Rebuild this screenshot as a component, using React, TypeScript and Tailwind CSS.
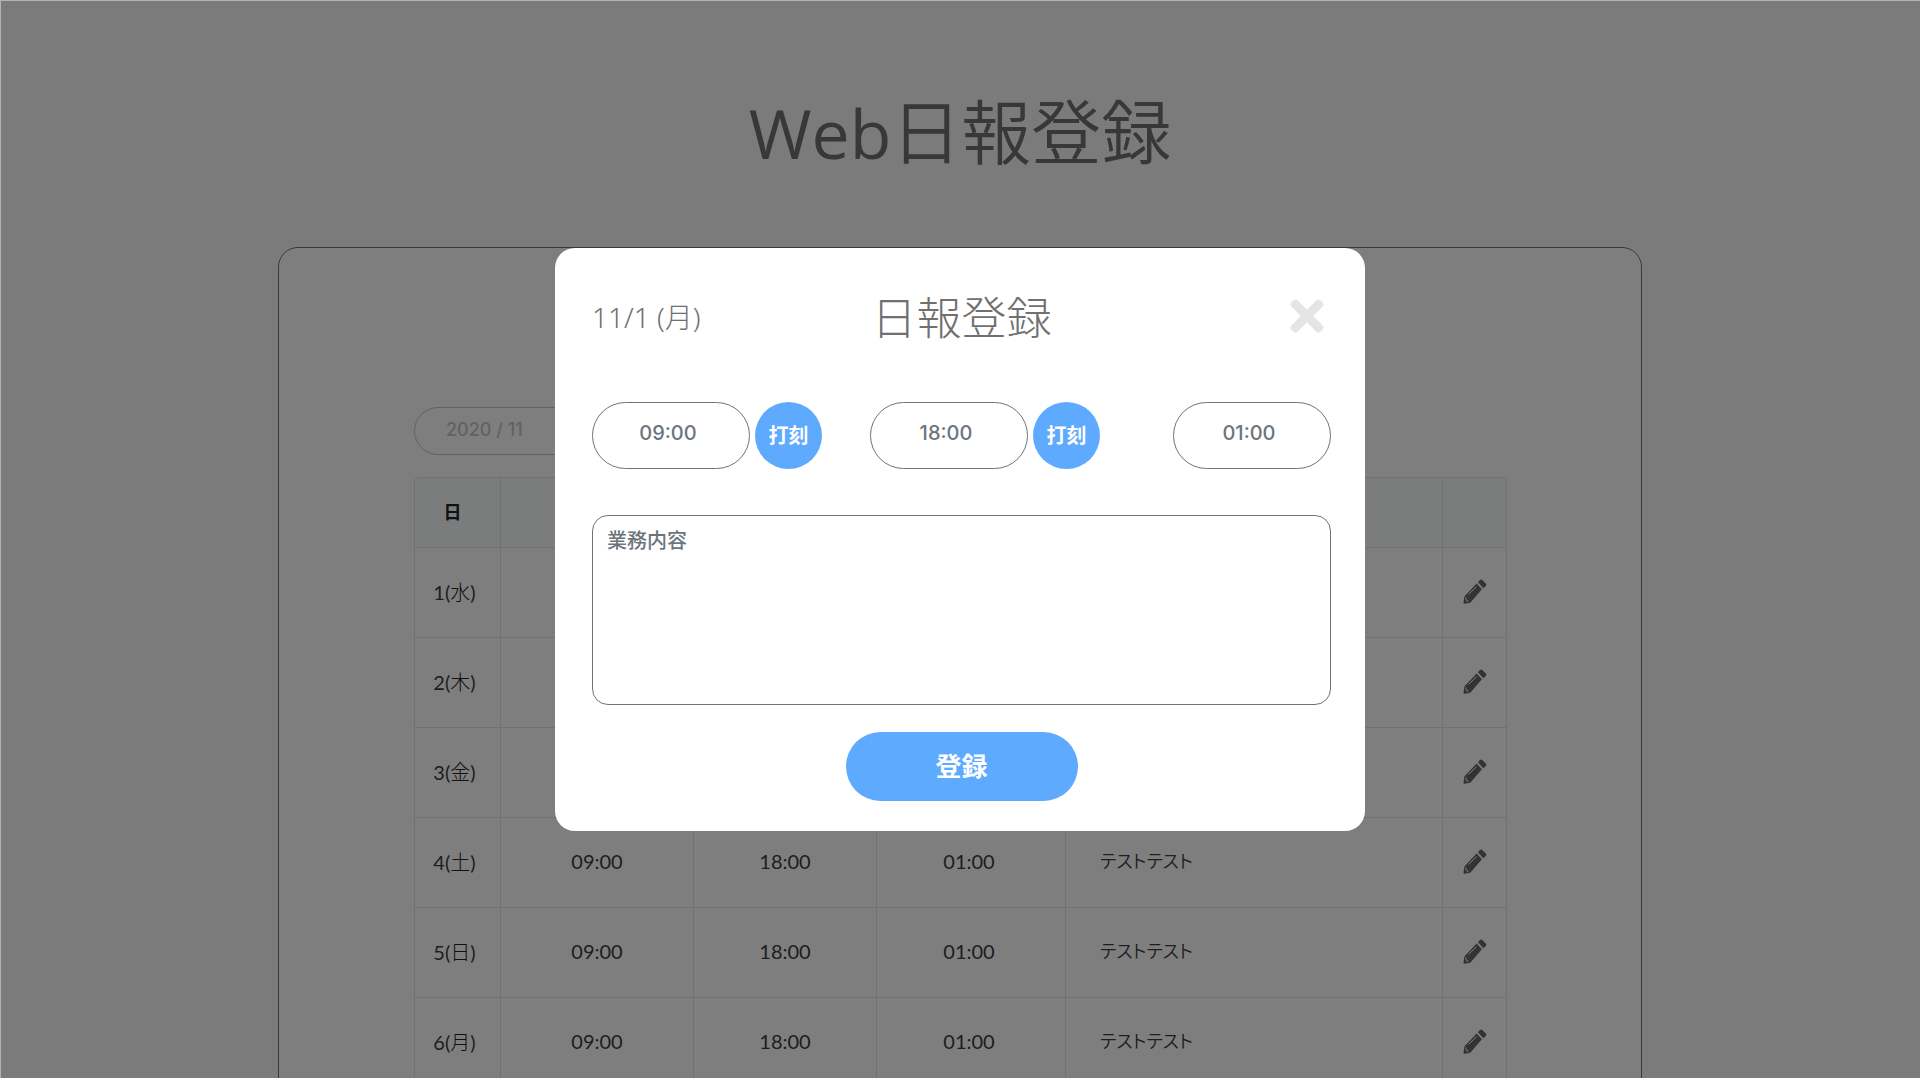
import { useState } from 'react'
import { FaTimes } from 'react-icons/fa'

type Report = {
  date: number
  weekday: string
  start: string
  end: string
  rest: string
  note: string
}

const reports: Report[] = ['水', '木', '金', '土', '日', '月'].map((weekday, i) => ({
  date: i + 1,
  weekday,
  start: '09:00',
  end: '18:00',
  rest: '01:00',
  note: 'テストテスト',
}))

function PencilIcon() {
  return (
    <svg viewBox="0 0 72 76" className="h-[25px] w-6" aria-hidden="true">
      <path
        fill="currentColor"
        d="M41 14 L57 31 L23 71 Q21 73 18 73 L4 75 Q1 75 1 72 L3 57 Q3 54 5 52 Z M45 10 L51 3 Q54 0 58 3 L69 14 Q72 18 69 21 L61 28 Z"
      />
      <path fill="none" stroke="#fdfdfd" strokeWidth="3" strokeLinecap="round" d="M17 46 L40 24 M8 57 L9 64 L13 65 L14 69" />
    </svg>
  )
}

function TimeInput({ label, value, onChange }: { label: string; value: string; onChange: (v: string) => void }) {
  return (
    <input
      type="text"
      aria-label={label}
      value={value}
      onChange={(e) => onChange(e.target.value)}
      className="w-[158px] h-[67px] rounded-full border border-[#6c757d] bg-white pr-[6px] pb-[6px] text-center font-['Inter','Noto_Sans_CJK_JP',sans-serif] text-[20px] font-medium text-[#6c757d]"
    />
  )
}

function StampButton() {
  return (
    <button type="button" className="size-[67px] rounded-full bg-[#5eaaff] text-[20px] font-bold text-white">
      打刻
    </button>
  )
}

function ReportTable() {
  const cell = 'border-t border-l border-[#e2e2e2] pb-[3px]'
  return (
    <div className="overflow-hidden rounded-[4px] border border-[#e2e2e2]">
      <table className="w-full table-fixed border-separate border-spacing-0 font-['Lato','Noto_Sans_CJK_JP',sans-serif] text-[20px] text-[#3c3c3c]">
        <colgroup>
          <col className="w-[85px]" />
          <col className="w-[193px]" />
          <col className="w-[183px]" />
          <col className="w-[189px]" />
          <col />
          <col className="w-[64px]" />
        </colgroup>
        <thead>
          <tr className="h-[69px] bg-[#f7f9f8]">
            <th className="pr-[10px] text-[18px] font-bold text-[#222]">日</th>
            <th aria-label="出勤" className="border-l border-[#e2e2e2]" />
            <th aria-label="退勤" className="border-l border-[#e2e2e2]" />
            <th aria-label="休憩" className="border-l border-[#e2e2e2]" />
            <th aria-label="業務内容" className="border-l border-[#e2e2e2]" />
            <th aria-label="編集" className="border-l border-[#e2e2e2]" />
          </tr>
        </thead>
        <tbody>
          {reports.map((r) => (
            <tr key={r.date} className="h-[90px]">
              <td className="border-t border-[#e2e2e2] pr-[6px] pb-[2px] text-center">
                {r.date}(<span className="font-light text-[#222]">{r.weekday}</span>)
              </td>
              <td className={`${cell} text-center`}>{r.start}</td>
              <td className={`${cell} text-center`}>{r.end}</td>
              <td className={`${cell} pr-1 text-center`}>{r.rest}</td>
              <td className={`${cell} pl-[34px] text-[18px] font-[350] [font-feature-settings:'palt']`}>{r.note}</td>
              <td className={cell}>
                <button type="button" aria-label={`${r.date}日 編集`} className="mx-auto block text-[#666]">
                  <PencilIcon />
                </button>
              </td>
            </tr>
          ))}
        </tbody>
      </table>
    </div>
  )
}

function ReportModal() {
  const [start, setStart] = useState('09:00')
  const [end, setEnd] = useState('18:00')
  const [rest, setRest] = useState('01:00')

  return (
    <div className="fixed inset-0 flex items-center justify-center border-t border-l border-[#b3b3b3] bg-black/50 pr-px">
      <div
        role="dialog"
        aria-labelledby="modal-title"
        className="w-full max-w-[810px] rounded-[20px] bg-white pt-9 pr-[34px] pb-[30px] pl-[37px]"
      >
        <div className="grid h-[66px] grid-cols-3 items-center font-light text-[#707070]">
          <p className="text-[28px]">11/1 (月)</p>
          <h2 id="modal-title" className="text-center text-[45px] leading-none">日報登録</h2>
          <button type="button" aria-label="閉じる" className="justify-self-end pb-[3px] text-[#e5e5e5]">
            <FaTimes className="size-12" />
          </button>
        </div>

        <div className="mt-[52px] flex items-center">
          <div className="flex gap-[5px]">
            <TimeInput label="出勤" value={start} onChange={setStart} />
            <StampButton />
          </div>
          <div className="ml-12 flex gap-[5px]">
            <TimeInput label="退勤" value={end} onChange={setEnd} />
            <StampButton />
          </div>
          <div className="ml-auto flex">
            <TimeInput label="休憩" value={rest} onChange={setRest} />
          </div>
        </div>

        <textarea
          aria-label="業務内容"
          placeholder="業務内容"
          className="mt-[46px] block h-[190px] w-full resize-none rounded-[16px] border border-[#6c757d] px-[14px] py-[10px] text-[20px] font-medium text-[#6c757d] placeholder:text-[#6c757d]"
        />

        <button
          type="button"
          className="mx-auto mt-[27px] block h-[69px] w-[232px] rounded-full bg-[#5eaaff] text-[26px] font-bold text-white"
        >
          登録
        </button>
      </div>
    </div>
  )
}

export default function App() {
  return (
    <div className="h-screen overflow-hidden bg-[#f7f7f7] font-['Noto_Sans','Noto_Sans_CJK_JP',sans-serif]">
      <h1 className="pt-[82px] text-center text-[70px] leading-[100px] font-[350] text-[#707070]">
        <span className="font-['Open_Sans',sans-serif] text-[68px] font-normal">Web</span>日報登録
      </h1>
      <main className="mx-auto mt-16 w-full max-w-[1364px] rounded-t-[20px] border border-[#707070] bg-[#fdfdfd] pt-[159px] pr-[134px] pl-[135px]">
        <input
          type="text"
          aria-label="年月"
          defaultValue="2020 / 11"
          className="mb-[22px] block h-12 w-[240px] rounded-full border border-[#c4c4c4] px-[31px] pb-1 font-['Inter',sans-serif] text-[18px] font-medium text-[#c4c4c4]"
        />
        <ReportTable />
      </main>
      <ReportModal />
    </div>
  )
}
